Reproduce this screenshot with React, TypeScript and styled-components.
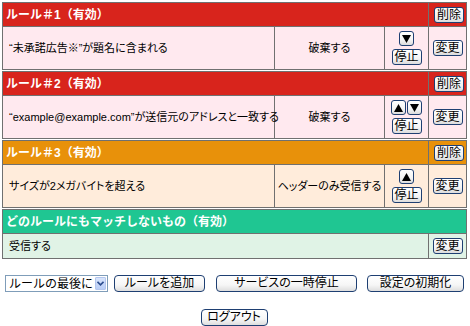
import styled, { createGlobalStyle } from "styled-components";

const GlobalStyle = createGlobalStyle`
  body {
    margin: 0;
    background: #ffffff;
    font-family: "Liberation Sans", "Noto Sans CJK JP", sans-serif;
    color: #000;
  }
`;

const palette = {
  red: { head: "#d8241c", body: "#ffe9ef" },
  orange: { head: "#e8910a", body: "#ffecdb" },
  green: { head: "#1fc692", body: "#e0f3e6" },
};

type Tone = keyof typeof palette;

const Page = styled.div`
  width: 470px;
  padding: 2px 0 0 2px;
  box-sizing: border-box;
`;

const RuleTable = styled.table`
  width: 465px;
  border-collapse: separate;
  border-spacing: 0;
  table-layout: fixed;
  border: 1px solid #707070;
  margin-bottom: 1px;
`;

const HeadCell = styled.td<{ $tone: Tone; $divider?: boolean }>`
  background: ${({ $tone }) => palette[$tone].head};
  color: #fff;
  font-size: 12px;
  font-weight: bold;
  height: 23px;
  padding: 0 0 0 3px;
  border-bottom: 1px solid #707070;
  border-left: ${({ $divider }) => ($divider ? "1px solid #707070" : "none")};
  text-align: ${({ $divider }) => ($divider ? "center" : "left")};
  white-space: nowrap;
  line-height: 1;
`;

const BodyCell = styled.td<{
  $tone: Tone;
  $divider?: boolean;
  $align?: "left" | "center";
  $h?: number;
}>`
  background: ${({ $tone }) => palette[$tone].body};
  font-size: 11px;
  font-feature-settings: "palt";
  height: ${({ $h }) => $h ?? 42}px;
  padding: ${({ $align }) => ($align === "center" ? "0" : "0 0 0 6px")};
  border-left: ${({ $divider }) => ($divider ? "1px solid #707070" : "none")};
  text-align: ${({ $align }) => $align ?? "left"};
  vertical-align: middle;
  white-space: nowrap;
  line-height: 1;
`;

const SmallButton = styled.button<{ $w?: number }>`
  width: ${({ $w }) => $w ?? 30}px;
  height: 16px;
  padding: 0;
  border: 1px solid #1e3f72;
  border-radius: 3px;
  background: linear-gradient(#ffffff 0%, #f4f4f4 60%, #dcdcdc 100%);
  font-family: inherit;
  font-feature-settings: "palt";
  font-size: 12px;
  line-height: 14px;
  color: #000;
  vertical-align: middle;
`;

const ArrowButton = styled(SmallButton)`
  width: 15px;
  height: 15px;
  display: inline-flex;
  align-items: center;
  justify-content: center;
`;

const OrderStack = styled.div`
  display: flex;
  flex-direction: column;
  align-items: center;
  gap: 3px;
`;

const ArrowRow = styled.div`
  display: flex;
  gap: 1px;
`;

const Controls = styled.div`
  display: flex;
  align-items: center;
  margin-top: 16px;
  padding-left: 3px;
`;

const SelectBox = styled.div`
  display: flex;
  align-items: stretch;
  width: 103px;
  height: 17px;
  box-sizing: border-box;
  border: 1px solid #7f9db9;
  background: #fff;
`;

const NativeSelect = styled.select`
  flex: 1;
  appearance: none;
  border: none;
  outline: none;
  background: transparent;
  padding: 0 0 0 3px;
  font-family: inherit;
  font-size: 12px;
  color: #000;
`;

const SelectArrow = styled.span`
  width: 13px;
  margin: 1px;
  border-radius: 1px;
  background: linear-gradient(#d8e4fb, #b9cdf6);
  border: 1px solid #b3c6ee;
  box-sizing: border-box;
  display: flex;
  align-items: center;
  justify-content: center;
`;

const WideButton = styled.button<{ $w: number; $ml?: number }>`
  width: ${({ $w }) => $w}px;
  height: 17px;
  margin-left: ${({ $ml }) => $ml ?? 0}px;
  padding: 0;
  border: 1px solid #1e3f72;
  border-radius: 4px;
  background: linear-gradient(#ffffff 0%, #f6f6f6 60%, #dedede 100%);
  font-family: inherit;
  font-feature-settings: "palt";
  font-size: 12px;
  line-height: 15px;
  color: #000;
`;

const LogoutRow = styled.div`
  display: flex;
  justify-content: center;
  margin-top: 17px;
  padding-right: 4px;
`;

const Tri = ({ up }: { up?: boolean }) => (
  <svg width="9" height="8" viewBox="0 0 9 8">
    <polygon points={up ? "4.5,0 9,8 0,8" : "0,0 9,0 4.5,8"} fill="#000" />
  </svg>
);

interface Rule {
  title: string;
  tone: Tone;
  condition: string;
  action: string;
  up: boolean;
  down: boolean;
}

const rules: Rule[] = [
  {
    title: "ルール＃1（有効）",
    tone: "red",
    condition: "“未承諾広告※”が題名に含まれる",
    action: "破棄する",
    up: false,
    down: true,
  },
  {
    title: "ルール＃2（有効）",
    tone: "red",
    condition: "“example@example.com”が送信元のアドレスと一致する",
    action: "破棄する",
    up: true,
    down: true,
  },
  {
    title: "ルール＃3（有効）",
    tone: "orange",
    condition: "サイズが2メガバイトを超える",
    action: "ヘッダーのみ受信する",
    up: true,
    down: false,
  },
];

const Cols = () => (
  <colgroup>
    <col style={{ width: 271 }} />
    <col style={{ width: 110 }} />
    <col style={{ width: 44 }} />
    <col />
  </colgroup>
);

const RuleBlock = ({ rule }: { rule: Rule }) => (
  <RuleTable>
    <Cols />
    <tbody>
      <tr>
        <HeadCell $tone={rule.tone} colSpan={3}>
          {rule.title}
        </HeadCell>
        <HeadCell $tone={rule.tone} $divider>
          <SmallButton>削除</SmallButton>
        </HeadCell>
      </tr>
      <tr>
        <BodyCell $tone={rule.tone}>{rule.condition}</BodyCell>
        <BodyCell $tone={rule.tone} $divider $align="center">
          {rule.action}
        </BodyCell>
        <BodyCell $tone={rule.tone} $divider $align="center">
          <OrderStack>
            <ArrowRow>
              {rule.up && (
                <ArrowButton>
                  <Tri up />
                </ArrowButton>
              )}
              {rule.down && (
                <ArrowButton>
                  <Tri />
                </ArrowButton>
              )}
            </ArrowRow>
            <SmallButton>停止</SmallButton>
          </OrderStack>
        </BodyCell>
        <BodyCell $tone={rule.tone} $divider $align="center">
          <SmallButton>変更</SmallButton>
        </BodyCell>
      </tr>
    </tbody>
  </RuleTable>
);

export default function App() {
  return (
    <>
      <GlobalStyle />
      <Page>
        {rules.map((r) => (
          <RuleBlock key={r.title} rule={r} />
        ))}
        <RuleTable>
          <Cols />
          <tbody>
            <tr>
              <HeadCell $tone="green" colSpan={4}>
                どのルールにもマッチしないもの（有効）
              </HeadCell>
            </tr>
            <tr>
              <BodyCell $tone="green" colSpan={3} $h={24}>
                受信する
              </BodyCell>
              <BodyCell $tone="green" $divider $align="center" $h={24}>
                <SmallButton>変更</SmallButton>
              </BodyCell>
            </tr>
          </tbody>
        </RuleTable>
        <Controls>
          <SelectBox>
            <NativeSelect defaultValue="last">
              <option value="last">ルールの最後に</option>
              <option value="first">ルールの最初に</option>
            </NativeSelect>
            <SelectArrow>
              <svg width="7" height="5" viewBox="0 0 7 5">
                <polyline
                  points="0.5,0.8 3.5,3.8 6.5,0.8"
                  fill="none"
                  stroke="#2c4d8f"
                  strokeWidth="1.6"
                />
              </svg>
            </SelectArrow>
          </SelectBox>
          <WideButton $w={91} $ml={6}>
            ルールを追加
          </WideButton>
          <WideButton $w={141} $ml={11}>
            サービスの一時停止
          </WideButton>
          <WideButton $w={97} $ml={10}>
            設定の初期化
          </WideButton>
        </Controls>
        <LogoutRow>
          <WideButton $w={67}>ログアウト</WideButton>
        </LogoutRow>
      </Page>
    </>
  );
}
